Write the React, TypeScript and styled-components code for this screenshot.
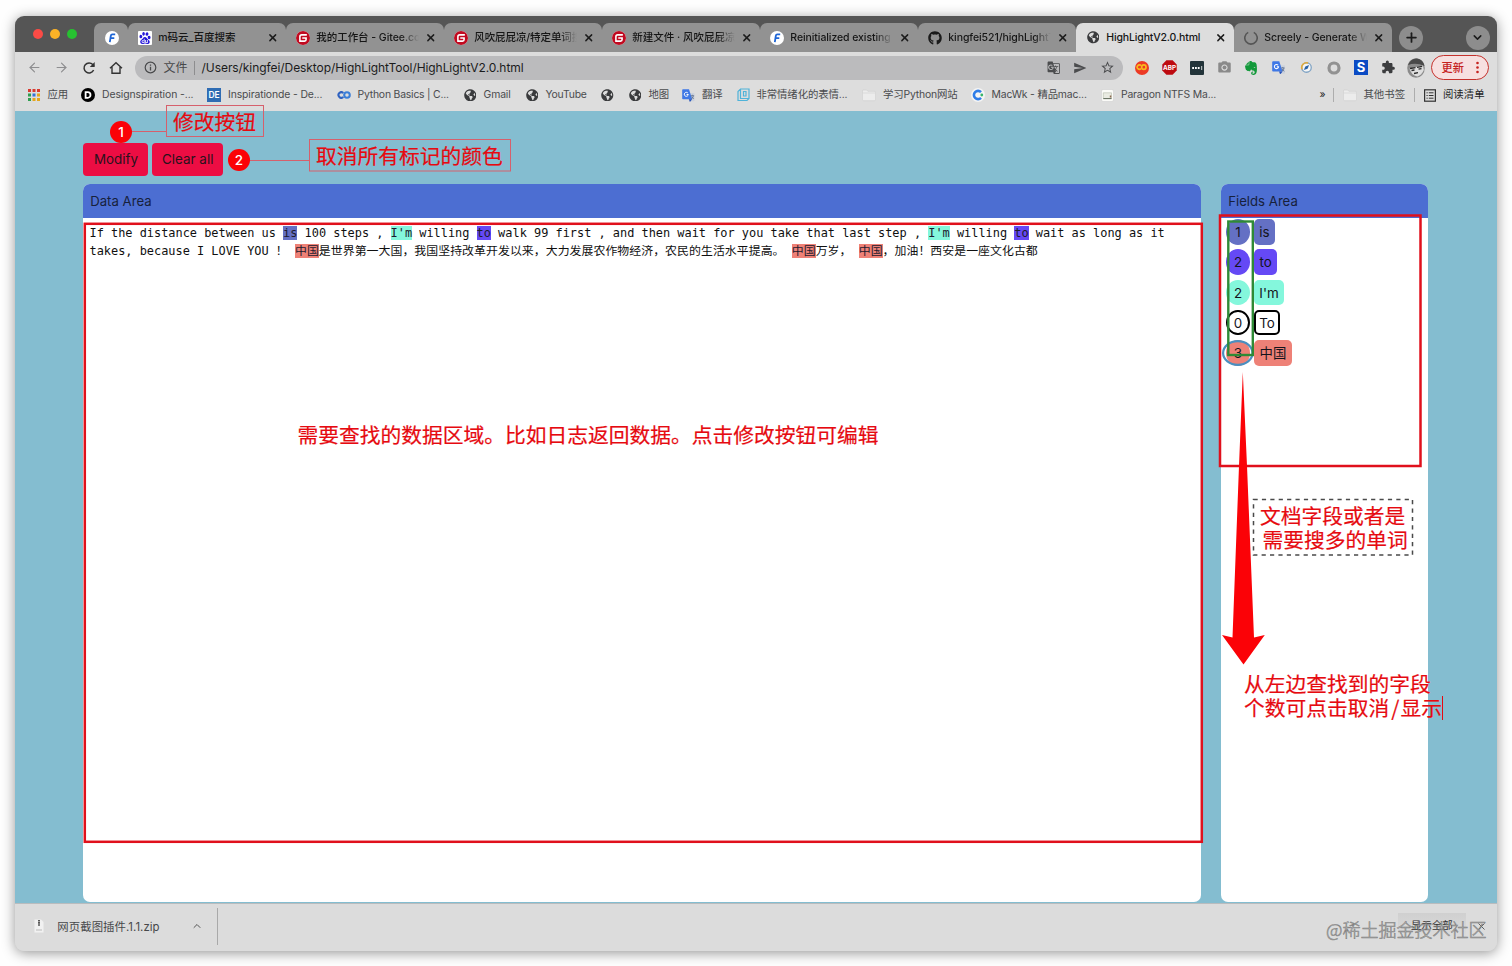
import React from "react";
import styled, { createGlobalStyle, css } from "styled-components";
import { FaGithub, FaGlobeAmericas } from "react-icons/fa";
import { SiBaidu, SiGitee, SiEvernote } from "react-icons/si";
import { MdGTranslate, MdSend, MdStarBorder, MdExtension, MdPhotoCamera } from "react-icons/md";
import { ArrowLeft, ArrowRight, X, Plus, ChevronDown, ChevronUp } from "lucide-react";

const Global = createGlobalStyle`
  * { box-sizing: border-box; }
  body { margin: 0; background: #fefefe; overflow: hidden; }
  svg { display: block; flex: none; }
`;

const ui = `Inter, "Noto Sans CJK SC", sans-serif`;

const Desktop = styled.div`
  position: relative;
  width: 1512px;
  height: 966px;
  padding: 15.5px 15px 15px 15.3px;
  overflow: hidden;
  font-family: ${ui};
`;

const Window = styled.div`
  width: 1481.5px;
  height: 935.5px;
  border-radius: 9px;
  overflow: hidden;
  display: flex;
  flex-direction: column;
  background: #dcdcdc;
  box-shadow: 0 2px 13px rgba(0, 0, 0, 0.42);
`;

const TabStrip = styled.div`
  height: 36.5px;
  flex: none;
  background: #555;
  display: flex;
  align-items: flex-end;
  padding-left: 18px;
`;

const Lights = styled.div`
  display: flex;
  gap: 7px;
  width: 61px;
  height: 36.5px;
  padding-top: 13.5px;
`;

const Light = styled.i<{ $c: string }>`
  width: 10px;
  height: 10px;
  border-radius: 50%;
  background: ${(p) => p.$c};
`;

const Tab = styled.div<{ $active?: boolean; $pinned?: boolean; $line?: boolean }>`
  position: relative;
  width: ${(p) => (p.$pinned ? 34 : 158)}px;
  height: 29px;
  flex: none;
  padding: 0 6px 0 ${(p) => (p.$pinned ? 10.5 : 9.5)}px;
  display: flex;
  align-items: center;
  border-radius: 7px 7px 0 0;
  background: ${(p) => (p.$active ? "#dddddd" : "#929292")};
  color: #161616;
  ${(p) =>
    p.$line &&
    css`
      &::after {
        content: "";
        position: absolute;
        right: -1px;
        top: 5px;
        width: 1px;
        height: 18px;
        background: #5c5c5c;
      }
    `}
`;

const TabTitle = styled.span<{ $fade?: boolean; $ls?: number }>`
  width: 104px;
  flex: none;
  margin-left: 6.5px;
  overflow: hidden;
  white-space: nowrap;
  font-size: 10.5px;
  font-weight: 500;
  line-height: 16px;
  letter-spacing: ${(p) => p.$ls ?? 0}px;
  ${(p) =>
    p.$fade &&
    css`
      mask-image: linear-gradient(90deg, #000 82%, transparent 99%);
    `}
`;

const Favicon = styled.span<{ $bg?: string; $round?: boolean }>`
  width: 14px;
  height: 14px;
  flex: none;
  display: flex;
  align-items: center;
  justify-content: center;
  background: ${(p) => p.$bg ?? "transparent"};
  border-radius: ${(p) => (p.$round ? "50%" : "1px")};
`;

const CloseSlot = styled.span`
  width: 12px;
  margin-left: 4.5px;
  display: flex;
  justify-content: center;
`;

const StripButton = styled.span<{ $gap: number }>`
  width: 24px;
  height: 24px;
  margin: 0 0 2.5px ${(p) => p.$gap}px;
  border-radius: 50%;
  background: #8d8d8d;
  display: flex;
  align-items: center;
  justify-content: center;
`;

const Toolbar = styled.div`
  height: 31px;
  flex: none;
  display: flex;
  align-items: center;
  background: #dddddd;
  padding-left: 10.7px;
`;

const NavButton = styled.span<{ $w: number }>`
  width: ${(p) => p.$w}px;
  display: flex;
  justify-content: center;
  flex: none;
`;

const Omnibox = styled.div`
  width: 988px;
  height: 24px;
  border-radius: 12px;
  background: #bbbbbd;
  display: flex;
  align-items: center;
  padding-left: 9px;
  font-size: 12px;
  color: #1b1b1c;
`;

const Scheme = styled.span`
  width: 31.5px;
  margin-left: 6.5px;
  height: 14px;
  line-height: 13px;
  border-right: 1px solid #8d8d8f;
  color: #47484a;
`;

const Url = styled.span`
  margin-left: 6.6px;
  width: 845px;
  letter-spacing: -0.07px;
`;

const OmniIcons = styled.span`
  display: flex;
  align-items: center;
  gap: 13px;
  color: #4b4c4e;
`;

const Extensions = styled.div`
  display: flex;
  margin-left: 5.3px;
`;

const ExtSlot = styled.span`
  width: 27.38px;
  height: 20px;
  display: flex;
  align-items: center;
  justify-content: center;
`;

const UpdatePill = styled.div`
  width: 58.5px;
  height: 25px;
  margin-left: 1.2px;
  border: 1.3px solid #c5312c;
  border-radius: 13px;
  background: #f7e0e0;
  color: #c5221f;
  font-size: 11.2px;
  font-weight: 500;
  display: flex;
  align-items: center;
  justify-content: space-between;
  padding: 0 9px 1px 10px;
`;

const Bookmarks = styled.div`
  height: 27.5px;
  flex: none;
  display: flex;
  align-items: center;
  background: #dddddd;
  padding: 0 0 3.5px 11.7px;
  color: #4a4b4d;
`;

const Bookmark = styled.div<{ $w: number; $gap?: number; $ls?: number; $dark?: boolean }>`
  width: ${(p) => p.$w}px;
  flex: none;
  display: flex;
  align-items: center;
  gap: ${(p) => p.$gap ?? 7}px;
  font-size: 10.4px;
  line-height: 16px;
  letter-spacing: ${(p) => p.$ls ?? 0}px;
  white-space: nowrap;
  color: ${(p) => (p.$dark ? "#1e1e1f" : "inherit")};
`;

const BarLine = styled.i`
  width: 1px;
  height: 14px;
  margin-right: 9px;
  background: #adadad;
`;

const Page = styled.main`
  flex: 1;
  background: #84bdd0;
  padding: 32.5px 68.2px 0;
  display: flex;
  flex-direction: column;
`;

const Actions = styled.div`
  display: flex;
  gap: 3.5px;
  margin-bottom: 8.5px;
`;

const ActionButton = styled.button<{ $w: number }>`
  width: ${(p) => p.$w}px;
  height: 32.5px;
  padding: 0;
  border: 0;
  border-radius: 4px;
  background: #ec0d43;
  color: #29121c;
  font: 13.4px/32px ${ui};
`;

const Panels = styled.div`
  display: flex;
  gap: 20.5px;
  height: 718px;
`;

const Panel = styled.section<{ $w: number }>`
  width: ${(p) => p.$w}px;
  flex: none;
  border-radius: 7px;
  background: #fff;
  overflow: hidden;
`;

const PanelHeader = styled.header`
  height: 34px;
  padding-left: 6.7px;
  background: #4c6ed2;
  color: #17213c;
  font-size: 13.2px;
  line-height: 34px;
`;

const Code = styled.div`
  padding: 6px 6px;
  font-family: "DejaVu Sans Mono", "Noto Sans CJK SC", monospace;
  font-size: 11.92px;
  line-height: 18px;
  color: #101010;
  white-space: pre;
`;

const Sentence = styled.span`
  letter-spacing: 0.035px;
`;

const Mark = styled.mark<{ $c: string }>`
  background: ${(p) => p.$c};
  color: #1c1b2e;
`;

const FieldList = styled.div`
  display: flex;
  flex-direction: column;
  gap: 4.8px;
  padding: 1px 0 0 4.5px;
`;

const Field = styled.div`
  display: flex;
  align-items: center;
  gap: 4px;
  height: 25.5px;
  color: #14141c;
  font-size: 13.4px;
`;

const Count = styled.span<{ $c: string; $outline?: boolean }>`
  width: 24px;
  height: 25.5px;
  border-radius: 50%;
  text-align: center;
  line-height: ${(p) => (p.$outline ? 22 : 26)}px;
  background: ${(p) => p.$c};
  border: ${(p) => (p.$outline ? "2.4px solid #000" : "0")};
`;

const Word = styled.span<{ $c: string; $w: number; $outline?: boolean }>`
  width: ${(p) => p.$w}px;
  height: 25.5px;
  border-radius: 5px;
  text-align: center;
  line-height: ${(p) => (p.$outline ? 22 : 26)}px;
  background: ${(p) => p.$c};
  border: ${(p) => (p.$outline ? "2.4px solid #000" : "0")};
`;

const Downloads = styled.footer`
  height: 48px;
  flex: none;
  display: flex;
  align-items: center;
  border-top: 1px solid #b9bcbe;
  background: #dcdcdc;
  padding: 0 0 3px 18px;
  font-size: 11.4px;
  color: #47484a;
`;

const FileName = styled.span`
  width: 134px;
  margin-left: 12px;
  letter-spacing: 0.06px;
`;

const DownloadLine = styled.i`
  width: 1px;
  height: 37px;
  margin-left: 14px;
  background: #a9a9a9;
`;

const ShowAll = styled.span`
  width: 68px;
  height: 26px;
  margin-left: auto;
  text-align: center;
  line-height: 26px;
  font-size: 10.4px;
  color: #333;
  background: linear-gradient(#d0d0d0, #dcdcdc);
`;

const DownloadClose = styled.span`
  width: 31px;
  display: flex;
  justify-content: center;
`;

const Markup = styled.svg`
  position: absolute;
  left: 0;
  top: 0;
`;

const Note = styled.div<{ $x: number; $y: number }>`
  position: absolute;
  left: ${(p) => p.$x}px;
  top: ${(p) => p.$y}px;
  font: 20.76px/24px "Noto Sans CJK SC", sans-serif;
  color: #e60a10;
  -webkit-text-stroke: 0.2px #e60a10;
  white-space: pre;
`;

const Slash = styled.span`
  padding: 0 1px 0 2px;
`;

const Step = styled.div<{ $x: number; $y: number }>`
  position: absolute;
  left: ${(p) => p.$x}px;
  top: ${(p) => p.$y}px;
  width: 22px;
  height: 22px;
  border-radius: 50%;
  background: #fb0207;
  color: #fff;
  text-align: center;
  font: 500 13.5px/22px ${ui};
`;

const Watermark = styled.div`
  position: absolute;
  left: 1326px;
  top: 916px;
  font: 300 18px/26px "Noto Sans CJK SC", sans-serif;
  color: #d4d4d480;
  -webkit-text-stroke: 0.6px #6c6c6ccc;
  white-space: nowrap;
`;

const Globe = () => (
  <Favicon>
    <FaGlobeAmericas size={12.5} color="#3a3b3d" />
  </Favicon>
);

const Fehelper = () => (
  <Favicon $bg="#fff" $round>
    <svg width="14" height="14" viewBox="0 0 14 14" fill="none" stroke="#1f66d6" strokeWidth="1.8">
      <path d="M10.2 3.4H7.3Q6 3.4 5.8 4.8L4.8 11.2M4.6 7.2H9.3" />
    </svg>
  </Favicon>
);

const Gitee = () => (
  <Favicon $bg="#fff" $round>
    <SiGitee size={14} color="#c00a20" />
  </Favicon>
);

const Close = () => (
  <CloseSlot>
    <X size={11.5} strokeWidth={3} color="#1c1c1c" />
  </CloseSlot>
);

const Folder = () => (
  <svg width="14" height="13" viewBox="0 0 14 13">
    <path d="M.5 2q0-1 1-1h3.2l1.2 1.3h6.6q1 0 1 1v7.4q0 1-1 1h-11q-1 0-1-1z" fill="#ececec" stroke="#cfcfcf" strokeWidth=".6" />
    <path d="M.8 4h12.4" stroke="#d2d2d2" strokeWidth=".6" />
  </svg>
);

const Translate = ({ size = 13 }: { size?: number }) => (
  <svg width={size} height={size} viewBox="0 0 13 13">
    <path d="M6 4h5.8q.7 0 .7.7v6.800q0 .7-.7.7H8z" fill="#ccd2dc" />
    <path d="M1 .2h6l3.2 10H1q-.8 0-.8-.8V1Q.2.2 1 .2z" fill="#3f78e6" />
    <path d="M6.8 10.2h3.4L7.9 12.9z" fill="#2450b8" />
    <path d="M5.9 4.1A2 2 0 1 0 6.3 5.5H4.6" fill="none" stroke="#fff" strokeWidth="1" />
    <path d="M8.9 6.7h3.2M10.4 5.8v.9M11.4 6.9q-.5 2-1.9 3M9.7 7.6l2 2.4" fill="none" stroke="#5d6e8c" strokeWidth=".8" />
  </svg>
);

const Rings = ({ a, b, w = 14 }: { a: string; b: string; w?: number }) => (
  <svg width={w} height={w * 0.57} viewBox="0 0 14 8" fill="none" strokeWidth="2.1">
    <path d="M6.3 6A2.8 2.8 0 1 1 6.3 2" stroke={a} />
    <circle cx="10" cy="4" r="2.8" stroke={b} />
  </svg>
);

const appColors = ["#d93a30", "#d93a30", "#d93a30", "#2f9e4f", "#3572d8", "#e5a51b", "#2f9e4f", "#e5a51b", "#e5a51b"];

const Chrome = () => (
  <>
    <TabStrip>
      <Lights>
        <Light $c="#fb4b46" />
        <Light $c="#fcb226" />
        <Light $c="#27c131" />
      </Lights>
      <Tab $pinned $line>
        <Fehelper />
      </Tab>
      <Tab $line>
        <Favicon $bg="#fff">
          <SiBaidu size={12} color="#2416d8" />
        </Favicon>
        <TabTitle>m码云_百度搜索</TabTitle>
        <Close />
      </Tab>
      <Tab $line>
        <Gitee />
        <TabTitle $fade $ls={-0.05}>我的工作台 - Gitee.com</TabTitle>
        <Close />
      </Tab>
      <Tab $line>
        <Gitee />
        <TabTitle $fade $ls={-0.1}>风吹屁屁凉/特定单词搜索</TabTitle>
        <Close />
      </Tab>
      <Tab $line>
        <Gitee />
        <TabTitle $fade>新建文件 · 风吹屁屁凉/特</TabTitle>
        <Close />
      </Tab>
      <Tab $line>
        <Fehelper />
        <TabTitle $fade $ls={-0.08}>Reinitialized existing Git</TabTitle>
        <Close />
      </Tab>
      <Tab>
        <Favicon>
          <FaGithub size={14} color="#1b1b1b" />
        </Favicon>
        <TabTitle $fade $ls={-0.08}>kingfei521/highLightTool</TabTitle>
        <Close />
      </Tab>
      <Tab $active>
        <Globe />
        <TabTitle $ls={-0.14}>HighLightV2.0.html</TabTitle>
        <Close />
      </Tab>
      <Tab>
        <Favicon>
          <svg width="14" height="14" viewBox="0 0 14 14" fill="none" stroke="#555" strokeWidth="1.6">
            <path d="M4.2 1.4A6.2 6.2 0 1 0 9.8 1.4" />
          </svg>
        </Favicon>
        <TabTitle $fade $ls={-0.08}>Screely - Generate Website</TabTitle>
        <Close />
      </Tab>
      <StripButton $gap={7}>
        <Plus size={15} strokeWidth={2.8} color="#1c1c1c" />
      </StripButton>
      <StripButton $gap={42.5}>
        <ChevronDown size={13} strokeWidth={2.8} color="#1c1c1c" />
      </StripButton>
    </TabStrip>
    <Toolbar>
      <NavButton $w={17}>
        <ArrowLeft size={15} strokeWidth={1.9} color="#8e8e90" />
      </NavButton>
      <NavButton $w={37.5}>
        <ArrowRight size={15} strokeWidth={1.9} color="#8e8e90" />
      </NavButton>
      <NavButton $w={17}>
        <svg width="14" height="14" viewBox="0 0 14 14">
          <path d="M11.6 9A5 5 0 1 1 10.8 3.6L12 4.8" fill="none" stroke="#333" strokeWidth="1.5" />
          <path d="M12.7 1v4.9H7.8z" fill="#333" />
        </svg>
      </NavButton>
      <NavButton $w={37.5}>
        <svg width="14" height="14" viewBox="0 0 14 14" fill="none" stroke="#333" strokeWidth="1.4">
          <path d="M1 7.3 7 1.8l6 5.5M3 6v6.3h8V6" />
        </svg>
      </NavButton>
      <Omnibox>
        <svg width="13" height="13" viewBox="0 0 13 13" fill="none" stroke="#4a4b4d">
          <circle cx="6.5" cy="6.5" r="5.3" strokeWidth="1.2" />
          <path d="M6.5 5.8v3.6M6.5 3.5v1.3" strokeWidth="1.3" />
        </svg>
        <Scheme>文件</Scheme>
        <Url>/Users/kingfei/Desktop/HighLightTool/HighLightV2.0.html</Url>
        <OmniIcons>
          <MdGTranslate size={13.5} />
          <MdSend size={14} />
          <MdStarBorder size={15} />
        </OmniIcons>
      </Omnibox>
      <Extensions>
        <ExtSlot>
          <Favicon $bg="#ec3a25" $round>
            <Rings a="#f9ba1c" b="#f9ba1c" w={11} />
          </Favicon>
        </ExtSlot>
        <ExtSlot>
          <svg width="15" height="15" viewBox="0 0 15 15">
            <path d="M4.4.3h6.2l4.1 4.1v6.2l-4.1 4.1H4.4L.3 10.6V4.4z" fill="#bd0a10" />
            <text x="7.5" y="9.8" fontSize="6.3" fontWeight="700" fill="#fff" textAnchor="middle" fontFamily="Inter">
              ABP
            </text>
          </svg>
        </ExtSlot>
        <ExtSlot>
          <svg width="14" height="14" viewBox="0 0 14 14">
            <rect width="14" height="14" rx="1" fill="#23343a" />
            <path d="M2.2 7h1.8M5 7h1.8M7.8 7h1.8" stroke="#fff" strokeWidth="1.8" />
            <path d="M11.7 5v4" stroke="#fff" strokeWidth=".8" />
          </svg>
        </ExtSlot>
        <ExtSlot>
          <MdPhotoCamera size={15} color="#8a8a8a" />
        </ExtSlot>
        <ExtSlot>
          <SiEvernote size={14} color="#12993a" />
        </ExtSlot>
        <ExtSlot>
          <Translate size={13.5} />
        </ExtSlot>
        <ExtSlot>
          <svg width="13" height="13" viewBox="0 0 12 12" fill="none">
            <circle cx="6" cy="6" r="4.4" fill="#f5f5f5" stroke="#7fa3c4" strokeWidth="1.2" />
            <path d="M1.8 7.6A4.5 4.5 0 0 1 7.4 1.8" stroke="#e2ab3a" strokeWidth="1.4" />
            <path d="m8.4 3.6-3.5 1.5-1.3 3.3 3.4-1.3z" fill="#2862a8" />
          </svg>
        </ExtSlot>
        <ExtSlot>
          <svg width="14" height="14" viewBox="0 0 14 14" fill="none">
            <circle cx="7" cy="7" r="5" stroke="#929292" strokeWidth="3.2" />
          </svg>
        </ExtSlot>
        <ExtSlot>
          <svg width="14" height="15" viewBox="0 0 14 15">
            <rect width="14" height="15" fill="#0b4bc4" />
            <text x="7" y="12.2" fontSize="13" fontWeight="700" fill="#fff" textAnchor="middle" fontFamily="Inter">
              S
            </text>
          </svg>
        </ExtSlot>
        <ExtSlot>
          <MdExtension size={14.5} color="#3c3d3f" />
        </ExtSlot>
        <ExtSlot>
          <svg width="18" height="20" viewBox="0 0 18 20">
            <ellipse cx="9" cy="10" rx="8.8" ry="9.8" fill="#8b8b8b" />
            <path d="M1 7Q4 0 10 .5T17.5 8Q9 4 1 7z" fill="#4a4a4a" />
            <path d="M2.5 10.5 16 7.5l.8 4.5q-2 5-6.5 6.5Q4 17 2.5 10.5z" fill="#dedede" />
            <path d="m3 10.5 5.5-.8M10 9.3l5.2-1M4.5 12.5l3-.5M11.5 11.2l3-.6M7 15.5l4-.8" stroke="#2a2a2a" strokeWidth="1.3" />
          </svg>
        </ExtSlot>
      </Extensions>
      <UpdatePill>
        更新
        <svg width="3" height="13" viewBox="0 0 3 13" fill="#c5221f">
          <circle cx="1.5" cy="2" r="1.3" />
          <circle cx="1.5" cy="6.5" r="1.3" />
          <circle cx="1.5" cy="11" r="1.3" />
        </svg>
      </UpdatePill>
    </Toolbar>
    <Bookmarks>
      <Bookmark $w={54} $gap={6.5}>
        <svg width="14" height="14" viewBox="0 0 14 14">
          {appColors.map((c, i) => (
            <rect key={i} x={1 + (i % 3) * 4.5} y={1 + Math.floor(i / 3) * 4.5} width="3" height="3" fill={c} />
          ))}
        </svg>
        应用
      </Bookmark>
      <Bookmark $w={126} $ls={-0.08}>
        <Favicon $bg="#000" $round>
          <svg width="8" height="8" viewBox="0 0 8 8" fill="none" stroke="#fff" strokeWidth="1.8">
            <path d="M1.6 1.2H3.7a2.8 2.8 0 0 1 0 5.6H1.6z" />
          </svg>
        </Favicon>
        Designspiration -...
      </Bookmark>
      <Bookmark $w={130} $ls={-0.12}>
        <svg width="14" height="14" viewBox="0 0 14 14">
          <rect width="14" height="14" fill="#2f6cb3" />
          <text x="7" y="10.2" fontSize="8.5" fontWeight="600" fill="#fff" textAnchor="middle" fontFamily="Inter">
            DE
          </text>
        </svg>
        Inspirationde - De...
      </Bookmark>
      <Bookmark $w={126} $gap={6.5} $ls={-0.2}>
        <Rings a="#2f62c0" b="#3b7fd8" />
        Python Basics | C...
      </Bookmark>
      <Bookmark $w={62} $gap={6.5} $ls={-0.1}>
        <Globe />
        Gmail
      </Bookmark>
      <Bookmark $w={75.5} $gap={6.5} $ls={-0.2}>
        <Globe />
        YouTube
      </Bookmark>
      <Bookmark $w={27.5}>
        <Globe />
      </Bookmark>
      <Bookmark $w={54} $gap={6.5}>
        <Globe />
        地图
      </Bookmark>
      <Bookmark $w={55}>
        <Translate />
        翻译
      </Bookmark>
      <Bookmark $w={125} $gap={6.5} $ls={-0.1}>
        <svg width="13" height="14" viewBox="0 0 13 14" fill="none" stroke="#4fb3d9" strokeWidth="1.2">
          <path d="M3.5 1H12v9.5l-2 2H1V3.5zM3.5 1v9.5H12M6.5 3.5h2.5v4.5H6.5z" />
        </svg>
        非常情绪化的表情...
      </Bookmark>
      <Bookmark $w={109.5} $ls={-0.15}>
        <Folder />
        学习Python网站
      </Bookmark>
      <Bookmark $w={129.5} $gap={6} $ls={-0.16}>
        <Favicon $bg="#f4f4f4" $round>
          <svg width="12" height="12" viewBox="0 0 12 12" fill="none">
            <path d="M9 3.2A4.1 4.1 0 1 0 9 8.8" stroke="#2f7de8" strokeWidth="2.6" />
            <circle cx="9.8" cy="6" r="1.4" fill="#38b56b" />
          </svg>
        </Favicon>
        MacWk - 精品mac...
      </Bookmark>
      <Bookmark $w={218.5} $ls={-0.18}>
        <svg width="13" height="13" viewBox="0 0 13 13">
          <rect x=".5" y=".5" width="12" height="12" rx="1.5" fill="#fbfbf8" stroke="#d0d0d0" strokeWidth=".6" />
          <path d="M2.3 3.8h8.2v5.8H2.3z" fill="#e9ebe2" stroke="#b4bba9" strokeWidth=".6" />
          <path d="M2.3 9.6h8.2" stroke="#55604f" strokeWidth=".9" />
          <path d="M8.8 6.5h1.5v2H8.8z" fill="#8d6a50" />
        </svg>
        Paragon NTFS Ma...
      </Bookmark>
      <Bookmark $w={14} $dark>
        »
      </Bookmark>
      <BarLine />
      <Bookmark $w={70.5} $gap={6}>
        <Folder />
        其他书签
      </Bookmark>
      <BarLine />
      <Bookmark $w={70} $gap={7} $dark>
        <svg width="12" height="13" viewBox="0 0 12 13" fill="none" stroke="#333">
          <rect x=".6" y=".8" width="10.8" height="11.4" strokeWidth="1.2" />
          <path d="M2.5 3.8h1.2M2.5 6.5h1.2M2.5 9.2h1.2M4.8 3.8h4.7M4.8 6.5h4.7M4.8 9.2h4.7" />
        </svg>
        阅读清单
      </Bookmark>
    </Bookmarks>
  </>
);

const blue = "#6470c4";
const violet = "#6549f5";
const mint = "#84f7dc";
const coral = "#ee8177";

const fields = [
  { n: 1, word: "is", c: blue, w: 21 },
  { n: 2, word: "to", c: violet, w: 23.5 },
  { n: 2, word: "I'm", c: mint, w: 30 },
  { n: 0, word: "To", c: "#fff", w: 26, outline: true },
  { n: 3, word: "中国", c: coral, w: 38 },
];

export default function App() {
  return (
    <Desktop>
      <Global />
      <Window>
        <Chrome />
        <Page>
          <Actions>
            <ActionButton $w={65}>Modify</ActionButton>
            <ActionButton $w={71.5}>Clear all</ActionButton>
          </Actions>
          <Panels>
            <Panel $w={1117.5}>
              <PanelHeader>Data Area</PanelHeader>
              <Code>
                If the distance between us <Mark $c={blue}>is</Mark> 100 steps , <Mark $c={mint}>I'm</Mark> willing{" "}
                <Mark $c={violet}>to</Mark> walk 99 first , and then wait for you take that last step ,{" "}
                <Mark $c={mint}>I'm</Mark> willing <Mark $c={violet}>to</Mark> wait as long as it{"\n"}
                takes, because I LOVE YOU ！{" "}
                <Sentence>
                  <Mark $c={coral}>中国</Mark>
                  是世界第一大国，我国坚持改革开发以来，大力发展农作物经济，农民的生活水平提高。{" "}
                  <Mark $c={coral}>中国</Mark>
                  万岁， <Mark $c={coral}>中国</Mark>，加油！西安是一座文化古都
                </Sentence>
              </Code>
            </Panel>
            <Panel $w={207}>
              <PanelHeader>Fields Area</PanelHeader>
              <FieldList>
                {fields.map((f) => (
                  <Field key={f.word}>
                    <Count $c={f.c} $outline={f.outline}>
                      {f.n}
                    </Count>
                    <Word $c={f.c} $w={f.w} $outline={f.outline}>
                      {f.word}
                    </Word>
                  </Field>
                ))}
              </FieldList>
            </Panel>
          </Panels>
        </Page>
        <Downloads>
          <svg width="12" height="14" viewBox="0 0 12 14">
            <path d="M1.5.5h6.5l2.5 2.5v10.5h-9z" fill="#f1f1f1" />
            <path d="M6 1v6" stroke="#333" strokeWidth="1.6" strokeDasharray="1.6 .5" />
            <path d="M3 11h6" stroke="#bbb" />
          </svg>
          <FileName>网页截图插件.1.1.zip</FileName>
          <ChevronUp size={12} strokeWidth={2} color="#555" />
          <DownloadLine />
          <ShowAll>显示全部</ShowAll>
          <DownloadClose>
            <X size={11} strokeWidth={2} color="#555" />
          </DownloadClose>
        </Downloads>
      </Window>

      <Markup width="1512" height="966" viewBox="0 0 1512 966" fill="none">
        <g stroke="#d6606c" strokeWidth="1">
          <path d="M131 131.5H166.5M249 160.5H310" />
          <rect x="166.5" y="105.5" width="97" height="31" />
          <rect x="309.5" y="139.5" width="201" height="31.5" />
        </g>
        <g stroke="#e0101c" strokeWidth="2.5">
          <rect x="84.8" y="223.8" width="1117" height="618" />
          <rect x="1220" y="215.5" width="200.5" height="250.5" />
        </g>
        <ellipse cx="1237.8" cy="353" rx="14.7" ry="11.8" stroke="#4a8fc0" strokeWidth="2.2" />
        <rect x="1228.3" y="221.5" width="24.5" height="133.5" stroke="#2f8a35" strokeWidth="2.4" />
        <path d="M1242.8 372 1247 466 1254 637.5 1264.8 635 1243.5 664.5 1222 635 1232.5 637.5 1239 466z" fill="#fb0207" />
        <rect x="1253.5" y="499.5" width="159" height="55.5" stroke="#4a4a4a" strokeWidth="1.5" strokeDasharray="4.2 4.2" />
        <path d="M1442.5 696V720" stroke="#e60a10" />
      </Markup>
      <Step $x={110} $y={120.5}>1</Step>
      <Step $x={228} $y={149}>2</Step>
      <Note $x={173} $y={108.5}>修改按钮</Note>
      <Note $x={316} $y={143}>取消所有标记的颜色</Note>
      <Note $x={297.5} $y={422}>需要查找的数据区域。比如日志返回数据。点击修改按钮可编辑</Note>
      <Note $x={1260} $y={502.5}>文档字段或者是</Note>
      <Note $x={1262.5} $y={526.5}>需要搜多的单词</Note>
      <Note $x={1244} $y={670.5}>
        {"从左边查找到的字段\n个数可点击取消"}
        <Slash>/</Slash>显示
      </Note>
      <Watermark>@稀土掘金技术社区</Watermark>
    </Desktop>
  );
}
